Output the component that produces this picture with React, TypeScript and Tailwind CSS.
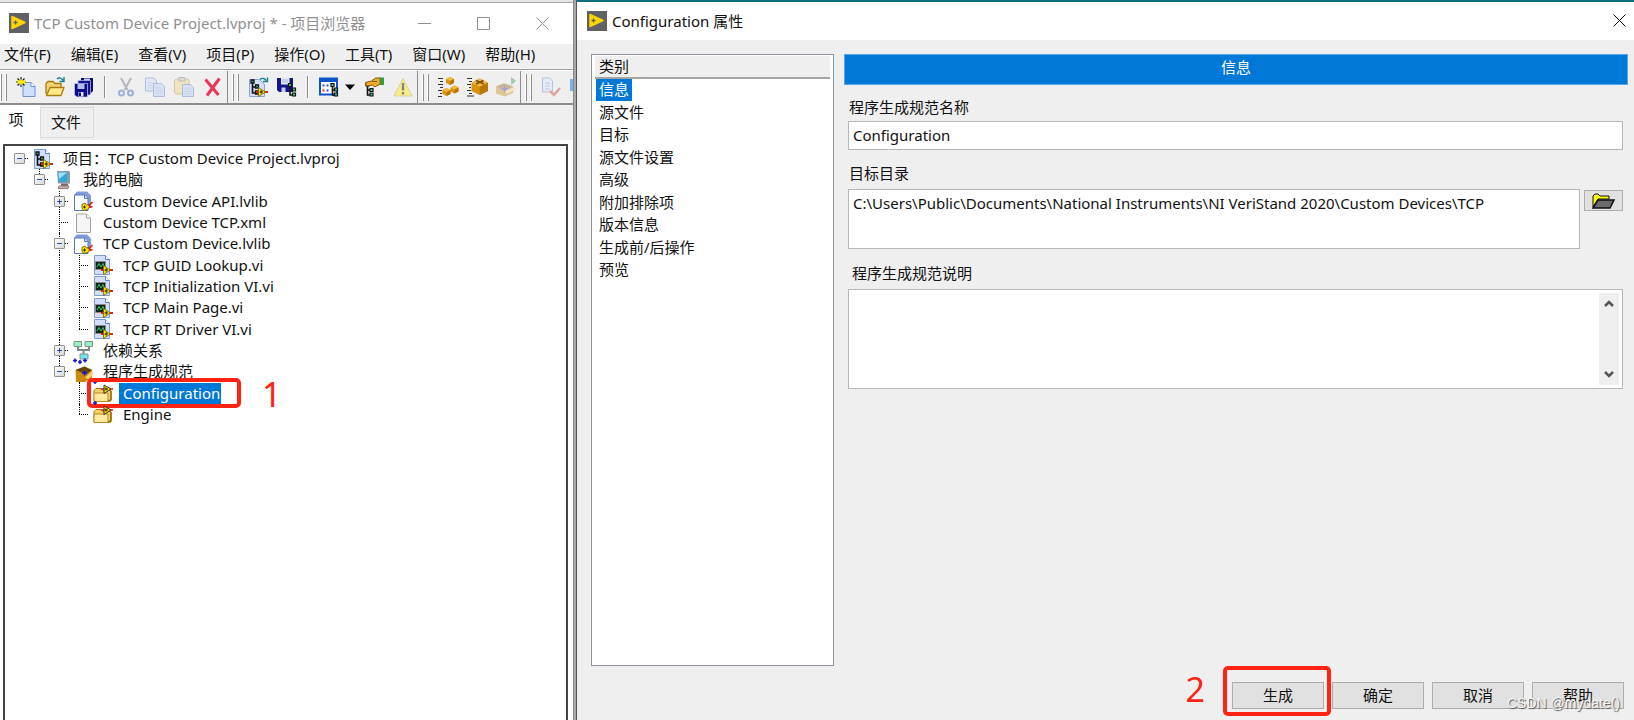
import type { ReactNode } from 'react';
import clsx from 'clsx';

type IconProps = { children: ReactNode; faded?: boolean };

function Icon({ children, faded }: IconProps) {
  return (
    <svg viewBox="0 0 20 20" className={clsx('block h-5 w-5 shrink-0 overflow-visible', faded && 'opacity-40')} aria-hidden="true">
      {children}
    </svg>
  );
}

/* Shared pieces of the LabVIEW icons */

function Sheet() {
  return (
    <>
      <path d="M1.500 .5h11l4 4v15h-15z" fill="#d3dffa" stroke="#7f9bd3" />
      <path d="M12.500 .5v4h4" fill="#fff" stroke="#5f80c4" />
    </>
  );
}

function RunArrow() {
  return (
    <>
      <path d="M8 15h12" stroke="#e02020" strokeWidth="2" />
      <path d="M10.500 10.500l7 4.500-7 4.500z" fill="#ffea00" stroke="#6e6200" strokeWidth=".8" />
      <path d="M11.500 15h3.500M13.200 13.200v3.500" stroke="#222" />
    </>
  );
}

function TreeMark() {
  return (
    <>
      <path d="M4.500 4v12h5M4.500 10h5" fill="none" stroke="#111" strokeWidth="1.600" />
      <path d="M3 3h3v3H3zM7.500 8h3v3h-3zM7.500 14h3v3h-3z" fill="#2fae80" stroke="#111" strokeWidth="1.300" />
    </>
  );
}

function Cube({ x, y, s }: { x: number; y: number; s: number }) {
  return (
    <g transform={`translate(${x} ${y}) scale(${s})`}>
      <path d="M5 0l5 2.500v5L5 10 0 7.500v-5z" fill="#d9930d" />
      <path d="M5 0l5 2.500L5 5 0 2.500z" fill="#f0bc3c" />
      <path d="M5 5l5-2.500v5L5 10z" fill="#b87806" />
    </g>
  );
}

function AppLogo() {
  return (
    <Icon>
      <path d="M0 0h20v20H0z" fill="#5f6164" />
      <path d="M3 3.500L16 9.500 3 15.500z" fill="#ffd500" stroke="#ffd500" strokeWidth="1.500" strokeLinejoin="round" />
      <path d="M4.500 9.500h4M6.500 7.500v4" stroke="#5f6164" strokeWidth="1.300" />
    </Icon>
  );
}

/* Toolbar icons */

const NewIcon = () => (
  <Icon>
    <path d="M7 5.500h8l4 4v10H7z" fill="#cfe0fc" stroke="#6e8fd0" />
    <path d="M15 5.500v4h4" fill="#fff" stroke="#6e8fd0" />
    <path d="M5 0v10M0 5h10M1.500 1.500l7 7M8.500 1.500l-7 7" stroke="#222" strokeWidth="1.200" />
    <path d="M5 2.500v5M1.500 5h8" stroke="#ffee00" strokeWidth="2.800" />
  </Icon>
);

const OpenIcon = () => (
  <Icon>
    <path d="M1 17V6.500l2-2h5l2 2h6v4" fill="#f1d377" stroke="#a97b0a" strokeWidth="1.300" strokeLinejoin="round" />
    <path d="M1.500 18.500L5 10.500h14l-3 8z" fill="#ffe98a" stroke="#a97b0a" strokeWidth="1.300" strokeLinejoin="round" />
    <path d="M12 2c2-2 5-1 6 1.500M19 0v4.500h-4.500" fill="none" stroke="#167f93" strokeWidth="1.400" />
  </Icon>
);

const SaveAllIcon = () => (
  <Icon>
    <path d="M7 1h12v13l-2 2H7z" fill="#0c0c78" />
    <path d="M10 1.500h6v3h-6z" fill="#c3cdf0" />
    <path d="M4 3.500h12.500V17l-1 1H4z" fill="#14148c" stroke="#b9c4e8" strokeWidth=".7" />
    <path d="M.5 6.500h13V20H3L.5 18z" fill="#0c0c86" stroke="#c9d2f0" strokeWidth=".7" />
    <path d="M3.500 7h7v5h-7z" fill="#b3bfea" />
    <path d="M4.500 15h5v4.500h-5z" fill="#dfe4f6" />
    <path d="M5 15.500h2V19H5z" fill="#0c0c86" />
  </Icon>
);

const CutIcon = () => (
  <Icon faded>
    <path d="M5 1l6.500 12M15 1L8.500 13" stroke="#5b6472" strokeWidth="2" />
    <circle cx="5.500" cy="16" r="2.500" fill="none" stroke="#2456b8" strokeWidth="2" />
    <circle cx="14.500" cy="16" r="2.500" fill="none" stroke="#2456b8" strokeWidth="2" />
  </Icon>
);

const CopyIcon = () => (
  <Icon faded>
    <path d="M.5 1h8l3 3v10H.5z" fill="#cfdffc" stroke="#4b74c9" />
    <path d="M2.500 6h6M2.500 8.500h5M2.500 11h5" stroke="#86a8ea" />
    <path d="M8.500 6.500h8l3 3v10h-11z" fill="#b6cefa" stroke="#4b74c9" />
    <path d="M10.500 11h6M10.500 13.500h7M10.500 16h7" stroke="#86a8ea" />
  </Icon>
);

const PasteIcon = () => (
  <Icon faded>
    <path d="M2 2h12l1 1v14H2L.5 15V3.500z" fill="#f3d471" stroke="#a98c36" />
    <path d="M5 .5h6V4H5z" fill="#bbb" stroke="#777" />
    <path d="M8.500 7.500h8l3 3v9h-11z" fill="#b6cefa" stroke="#4b74c9" />
    <path d="M10.500 12h6M10.500 14.500h7M10.500 17h7" stroke="#86a8ea" />
  </Icon>
);

const DeleteIcon = () => (
  <Icon>
    <path d="M2.500 2.500l13 15.500M16.500 1.500L4 18.500" fill="none" stroke="#ee3358" strokeWidth="3" />
  </Icon>
);

const HierarchyIcon = () => (
  <Icon>
    <path d="M1.500 2.500h10l5 5v12h-15z" fill="#d3e0fb" stroke="#8aa3d8" />
    <TreeMark />
    <RunArrow />
    <path d="M12 2.500c2-2 5-1 6 1M19.500 .5v4H15" fill="none" stroke="#167f93" strokeWidth="1.400" />
  </Icon>
);

const SaveTreeIcon = () => (
  <Icon>
    <path d="M0 1h16v14H2l-2-2z" fill="#14148c" />
    <path d="M4 1h8.500v6.500H4z" fill="#e3e8f8" />
    <path d="M5 3h6M5 5h6" stroke="#a8b2dc" />
    <path d="M4.500 10.500h4V15h-4z" fill="#c3cdf0" />
    <path d="M13 8v10h4M13 13h4" fill="none" stroke="#111" strokeWidth="1.600" />
    <path d="M11.500 6.500h3v3h-3zM15.500 11h3v3h-3zM15.500 16h3v3h-3z" fill="#35c98a" stroke="#111" strokeWidth="1.200" />
  </Icon>
);

const ViewIcon = () => (
  <Icon>
    <path d="M1 1.500h17v16H1z" fill="#fff" stroke="#0c55c8" strokeWidth="2" />
    <path d="M0 1h19v4H0z" fill="#0c55c8" />
    <path d="M3.500 8.500h2M7.500 8.500h2M7.500 13.500h2" stroke="#2c4be0" strokeWidth="2" />
    <path d="M3.500 13.500h2" stroke="#f05030" strokeWidth="2.500" />
    <path d="M13.500 8v10h4M13.500 13h4" fill="none" stroke="#111" strokeWidth="1.600" />
    <path d="M12 6.500h3v3h-3zM15.500 11h3v3h-3zM15.500 16h3v3h-3z" fill="#35c98a" stroke="#111" strokeWidth="1.200" />
  </Icon>
);

const HandIcon = () => (
  <Icon>
    <path d="M3.500 8v10h4M3.500 13h4" fill="none" stroke="#111" strokeWidth="1.600" />
    <path d="M2 6h3v3H2zM6 11.500h3v3H6zM6 16h3v3H6z" fill="#35c98a" stroke="#111" strokeWidth="1.200" />
    <path d="M1.500 5.500l6-1.500 4-3h5v6l-6 3-2-2-6 1z" fill="#f0a928" stroke="#8e5a00" />
    <path d="M8 4.500h5" stroke="#8e5a00" />
    <path d="M15.500 .5H20V8h-4.500z" fill="#3a9a3c" />
  </Icon>
);

const WarnIcon = () => (
  <Icon>
    <path d="M10 1.500l9 17.500H1z" fill="#f8ef86" stroke="#d8d0a0" strokeLinejoin="round" />
    <path d="M10 6v7.500M10 15v2.500" stroke="#85857a" strokeWidth="2.400" />
  </Icon>
);

const BuildAllIcon = () => (
  <Icon>
    <path d="M0 1.500h5M2 4.500h3M0 7.500h5M2 10.500h3M0 13.500h4M2 16.500h2M0 19.500h4" stroke="#333" />
    <Cube x={8} y={0} s={0.8} />
    <Cube x={12.500} y={8.500} s={0.8} />
    <Cube x={4.500} y={11} s={0.8} />
  </Icon>
);

const BuildOneIcon = () => (
  <Icon>
    <path d="M0 1.500h5M2 4.500h3M0 7.500h4M2 10.500h2M0 13.500h4M2 16.500h3M0 19h7" stroke="#333" />
    <Cube x={4.500} y={1.500} s={1.650} />
    <path d="M9 3.500l8 3.500M16.500 3.500L9 7" stroke="#7c4c00" strokeWidth="1.400" />
  </Icon>
);

const DeployIcon = () => (
  <Icon faded>
    <path d="M0 9.500l8-3 9 3v6.500l-8 3.500-9-3z" fill="#c98a1b" />
    <path d="M0 9.500l8-3 9 3-8 4z" fill="#8e5e10" />
    <path d="M9 14l9-4 2 2-9 5z" fill="#f9d888" />
    <path d="M8.500 8l1 3 3 1-3 1-1 3-1-3-3-1 3-1z" fill="#2b2be0" />
    <path d="M15 0l5 4-5 4z" fill="#2c9c3a" />
  </Icon>
);

const CheckPageIcon = () => (
  <Icon faded>
    <path d="M1.500 1h7l3 3v11h-10z" fill="#dbe7ff" stroke="#5b7fd0" />
    <path d="M4 6h5M4 9h5M4 12h5" stroke="#7d9be0" />
    <path d="M9 14l4 4 6-7" fill="none" stroke="#c23a22" strokeWidth="2.500" />
  </Icon>
);

/* Tree icons */

const ProjectIcon = () => (
  <Icon>
    <Sheet />
    <TreeMark />
    <RunArrow />
  </Icon>
);

const ComputerIcon = () => (
  <Icon>
    <path d="M4 1h12l1 1v11.500H5z" fill="#8c9aa6" />
    <path d="M5.500 2.500h8.500v9.500H5.500z" fill="#2fa8d8" />
    <path d="M5.500 2.500h8.500l-8 6.500z" fill="#9be2f7" />
    <path d="M8 13.500h7V16H8z" fill="#7d6a68" />
    <path d="M6 16h10l-1 2.500H5z" fill="#c7b2ac" stroke="#94807c" />
  </Icon>
);

const LibraryIcon = () => (
  <Icon>
    <path d="M1 4l3-3.500h10l4 4V17H1z" fill="#7f9cdd" />
    <path d="M1.500 4h10l3.500 3.500v12H1.500z" fill="#fff" stroke="#5878c0" />
    <path d="M11.500 4v3.500H15" fill="#cddafa" stroke="#5878c0" />
    <path d="M9 13.500l3-1.500 1.500 2 2.500-.5.5 2.500-2 2.500-4 1-1.500-2.500z" fill="#ffe600" stroke="#6e6200" strokeWidth=".9" />
    <path d="M15.500 15l4-4M16.500 16.500l3-1" stroke="#e01818" strokeWidth="1.600" />
    <path d="M11.500 14.500v3M10 16h3" stroke="#222" strokeWidth=".9" />
  </Icon>
);

const FileIcon = () => (
  <Icon>
    <path d="M3.500 1h10l4 4v14.500h-14z" fill="#f6f6f6" stroke="#a0a0a0" />
    <path d="M13.500 1v4h4" fill="#fff" stroke="#a0a0a0" />
  </Icon>
);

const ViIcon = () => (
  <Icon>
    <Sheet />
    <path d="M2.500 6.500h10v8h-10z" fill="#10261a" stroke="#8a8a8a" />
    <path d="M4 12l2-3.500L8 12l2-3.500 1 3" fill="none" stroke="#3dcc66" />
    <RunArrow />
  </Icon>
);

const DependencyIcon = () => (
  <Icon>
    <path d="M5 6v4h11V6M10.500 10v4" fill="none" stroke="#7d8a8a" strokeWidth="2" />
    <path d="M1 1.500h7.500v5H1zM12 1.500h7.500v5H12z" fill="#9af0c4" stroke="#7f9488" />
    <path d="M7 14h8v5H7z" fill="#6ee8ee" stroke="#7f9488" />
  </Icon>
);

const BuildSpecIcon = () => (
  <Icon>
    <path d="M2.500 8l9-3.500L19 8v8l-7 4H3z" fill="#c98a0e" />
    <path d="M2.500 8l9-3.500L19 8l-6 4.500z" fill="#6b4500" />
    <path d="M12 15.500L19 9l1.500 3-5 5.500z" fill="#f7cf6b" />
    <path d="M2-3.500v4M0-1.500h4M7-2v4M5 0h4M12-3.500v4M10-1.500h4M11.500 8.500v5M9 11h5" stroke="#1414e0" strokeWidth="1.600" />
  </Icon>
);

const SpecFolderIcon = () => (
  <Icon>
    <path d="M1 18V7.500l2-2h5l2 2h8V18z" fill="#f3d06a" stroke="#a97b0a" strokeLinejoin="round" />
    <path d="M1 18.500V10h14v8.500z" fill="#ffe9a0" stroke="#b98a1a" strokeLinejoin="round" />
    <path d="M15 18.500l3-2V8" fill="none" stroke="#8a6400" strokeWidth="1.300" />
    <path d="M8 6h12" stroke="#e02020" strokeWidth="1.600" />
    <path d="M11 2l7 4-7 4.500z" fill="#ffe600" stroke="#333" />
    <path d="M11.500 6h3.500M13 4.500v3" stroke="#222" />
    <path d="M0-1h4M2-3v4" stroke="#1414e0" strokeWidth="1.500" />
  </Icon>
);

/* Project explorer */

type Guide = 'none' | 'line' | 'tee' | 'end' | 'root';
type TreeRow = {
  label: string;
  guides: Guide[];
  toggle?: '+' | '-';
  icon: ReactNode;
  selected?: boolean;
};

const treeRows: TreeRow[] = [
  { label: '项目：TCP Custom Device Project.lvproj', guides: ['root'], toggle: '-', icon: <ProjectIcon /> },
  { label: '我的电脑', guides: ['none', 'end'], toggle: '-', icon: <ComputerIcon /> },
  { label: 'Custom Device API.lvlib', guides: ['none', 'none', 'tee'], toggle: '+', icon: <LibraryIcon /> },
  { label: 'Custom Device TCP.xml', guides: ['none', 'none', 'tee'], icon: <FileIcon /> },
  { label: 'TCP Custom Device.lvlib', guides: ['none', 'none', 'tee'], toggle: '-', icon: <LibraryIcon /> },
  { label: 'TCP GUID Lookup.vi', guides: ['none', 'none', 'line', 'tee'], icon: <ViIcon /> },
  { label: 'TCP Initialization VI.vi', guides: ['none', 'none', 'line', 'tee'], icon: <ViIcon /> },
  { label: 'TCP Main Page.vi', guides: ['none', 'none', 'line', 'tee'], icon: <ViIcon /> },
  { label: 'TCP RT Driver VI.vi', guides: ['none', 'none', 'line', 'end'], icon: <ViIcon /> },
  { label: '依赖关系', guides: ['none', 'none', 'tee'], toggle: '+', icon: <DependencyIcon /> },
  { label: '程序生成规范', guides: ['none', 'none', 'end'], toggle: '-', icon: <BuildSpecIcon /> },
  { label: 'Configuration', guides: ['none', 'none', 'none', 'tee'], icon: <SpecFolderIcon />, selected: true },
  { label: 'Engine', guides: ['none', 'none', 'none', 'end'], icon: <SpecFolderIcon /> },
];

function GuideCell({ guide, toggle }: { guide: Guide; toggle?: '+' | '-' }) {
  const branch = guide !== 'none' && guide !== 'line';
  return (
    <span className="relative flex h-full w-5 shrink-0 items-center">
      {guide !== 'none' && guide !== 'root' && (
        <span
          className={clsx('absolute top-0 left-[9px] border-l border-dotted border-black', guide === 'end' ? 'h-1/2' : 'h-full')}
        />
      )}
      {branch && <span className="ml-[9px] w-[9px] border-t border-dotted border-black" />}
      {toggle && (
        <button
          type="button"
          aria-label={toggle === '+' ? '展开' : '折叠'}
          className="absolute left-1 h-[11px] w-[11px] rounded-[1px] border border-[#919191] bg-linear-to-br from-white to-[#d8d8d8]"
        >
          <span className="absolute top-1 left-[2px] h-px w-[5px] bg-[#2b4fb0]" />
          {toggle === '+' && <span className="absolute top-[2px] left-1 h-[5px] w-px bg-[#2b4fb0]" />}
        </button>
      )}
    </span>
  );
}

function ProjectTree() {
  return (
    <ul className="grid h-[277px] auto-rows-fr pl-[5px]" role="tree">
      {treeRows.map((row, index) => (
        <li key={index} role="treeitem" aria-selected={!!row.selected} className="relative flex min-h-0 items-center">
          {row.guides.map((guide, column) => (
            <GuideCell key={column} guide={guide} toggle={column === row.guides.length - 1 ? row.toggle : undefined} />
          ))}
          <span className="ml-[3px]">{row.icon}</span>
          <span
            className={clsx(
              'ml-[6px] pl-1 pr-px leading-[21px] whitespace-nowrap',
              row.selected && 'bg-[#0078d7] text-white'
            )}
          >
            {row.label}
          </span>
          {/* Step 1 marker */}
          {row.selected && (
            <>
              <span className="absolute -top-1 left-[77px] h-[30px] w-[154px] rounded-[5px] border-4 border-[#ff2314]" />
              <span className="absolute top-[-5px] left-[252px] text-[34px] leading-none text-[#ff2314]">1</span>
            </>
          )}
        </li>
      ))}
    </ul>
  );
}

function Grip() {
  return (
    <span className="flex h-[27px] w-[7px] shrink-0 justify-between">
      <span className="w-[2px] border-r border-[#8c8c8c] bg-white" />
      <span className="w-[2px] border-r border-[#8c8c8c] bg-white" />
    </span>
  );
}

function ToolGroup({ children, last }: { children: ReactNode; last?: boolean }) {
  return (
    <div className={clsx('flex h-full items-center gap-[9px] pl-1', last ? 'min-w-0 overflow-hidden' : 'shrink-0 border-r border-[#8c8c8c] pr-1')}>
      {children}
    </div>
  );
}

function Tool({ label, children }: { label: string; children: ReactNode }) {
  return (
    <button type="button" aria-label={label} className="shrink-0">
      {children}
    </button>
  );
}

function Divider() {
  return <span className="mx-px h-[22px] w-[2px] shrink-0 border-r border-white bg-[#8c8c8c]" />;
}

const menus = ['文件(F)', '编辑(E)', '查看(V)', '项目(P)', '操作(O)', '工具(T)', '窗口(W)', '帮助(H)'];

function ProjectExplorer() {
  return (
    <section className="flex w-[574px] shrink-0 flex-col border-r border-[#8a8a8a] bg-[#efefef]">
      <div className="h-[3px] border-b border-[#a8a8a8] bg-[#e6e6e6]" />
      <header className="flex h-[41px] items-center bg-white pb-px pl-[9px] text-[#8f8f8f]">
        <AppLogo />
        <h1 className="ml-[5px] flex-1 whitespace-nowrap">TCP Custom Device Project.lvproj * - 项目浏览器</h1>
        <div className="flex gap-[46px] pr-6">
          <button type="button" aria-label="最小化">
            <svg viewBox="0 0 13 13" className="block h-[13px] w-[13px]"><path d="M0 6.500h13" stroke="#8f8f8f" /></svg>
          </button>
          <button type="button" aria-label="最大化">
            <svg viewBox="0 0 13 13" className="block h-[13px] w-[13px]"><path d="M.5 .5h12v12H.5z" fill="none" stroke="#8f8f8f" /></svg>
          </button>
          <button type="button" aria-label="关闭">
            <svg viewBox="0 0 13 13" className="block h-[13px] w-[13px]"><path d="M.5 .5l12 12M12.500 .5l-12 12" stroke="#8f8f8f" /></svg>
          </button>
        </div>
      </header>
      <nav className="flex h-[26px] items-center gap-5 border-b border-[#a0a0a0] pb-[6px] pl-1">
        {menus.map((menu) => (
          <button key={menu} type="button" className="whitespace-nowrap">{menu}</button>
        ))}
      </nav>
      <div className="flex h-[35px] border-t border-b-2 border-t-white border-b-[#8c8c8c]">
        <div className="-ml-1 flex h-full min-w-0 flex-1">
          <ToolGroup>
            <Grip />
            <Tool label="新建"><NewIcon /></Tool>
            <Tool label="打开"><OpenIcon /></Tool>
            <Tool label="保存全部"><SaveAllIcon /></Tool>
            <Divider />
            <Tool label="剪切"><CutIcon /></Tool>
            <Tool label="复制"><CopyIcon /></Tool>
            <Tool label="粘贴"><PasteIcon /></Tool>
            <Tool label="删除"><DeleteIcon /></Tool>
          </ToolGroup>
          <ToolGroup>
            <Grip />
            <Tool label="层次结构"><HierarchyIcon /></Tool>
            <Tool label="保存项目"><SaveTreeIcon /></Tool>
            <Divider />
            <button type="button" aria-label="视图" className="flex shrink-0 items-center gap-[6px]">
              <ViewIcon />
              <svg viewBox="0 0 10 6" className="h-[6px] w-[10px]"><path d="M0 .5h10L5 6z" /></svg>
            </button>
            <Tool label="属性"><HandIcon /></Tool>
            <Tool label="冲突"><WarnIcon /></Tool>
          </ToolGroup>
          <ToolGroup>
            <Grip />
            <Tool label="全部生成"><BuildAllIcon /></Tool>
            <Tool label="生成规范"><BuildOneIcon /></Tool>
            <Tool label="部署"><DeployIcon /></Tool>
          </ToolGroup>
          <ToolGroup last>
            <Grip />
            <Tool label="检查"><CheckPageIcon /></Tool>
            <span className="mt-2 h-3 w-5 shrink-0 self-start bg-[#7db0e8]" />
          </ToolGroup>
        </div>
      </div>
      <div className="flex items-start" role="tablist">
        <button type="button" role="tab" aria-selected="true" className="h-[35px] w-10 bg-white pr-2 pb-2">项</button>
        <button type="button" role="tab" aria-selected="false" className="mt-[2px] h-[31px] w-[54px] border border-[#dadada] pr-[2px] pb-[2px]">文件</button>
      </div>
      <div className="flex flex-1 flex-col bg-white pt-1 pr-[5px] pl-[3px]">
        <div className="flex-1 border-2 border-b-0 border-[#444] bg-white pt-[2px]">
          <ProjectTree />
        </div>
      </div>
    </section>
  );
}

/* Build specification properties */

const categories = ['信息', '源文件', '目标', '源文件设置', '高级', '附加排除项', '版本信息', '生成前/后操作', '预览'];

function ActionButton({ label, marked }: { label: string; marked?: boolean }) {
  return (
    <div className="relative">
      <button type="button" className="h-[27px] w-[92px] border border-[#adadad] bg-[#e1e1e1] leading-none">
        {label}
      </button>
      {/* Step 2 marker */}
      {marked && (
        <>
          <span className="absolute -top-4 -left-[9px] h-[50px] w-[108px] rounded-[5px] border-4 border-[#ff2314]" />
          <span className="absolute top-[-10px] right-[119px] text-[34px] leading-none text-[#ff2314]">2</span>
        </>
      )}
    </div>
  );
}

function CategoryList() {
  return (
    <aside className="flex w-[243px] shrink-0 flex-col border border-[#8e949b] bg-white p-[3px] pt-px">
      <h2 className="h-[23px] border-b-2 border-[#a5a5a5] bg-[#efefef] pl-1 leading-[21px]">类别</h2>
      <ul className="grid h-[203px] auto-rows-fr pl-px">
        {categories.map((category, index) => (
          <li key={category} className="min-h-0">
            <button
              type="button"
              className={clsx('block px-[3px] pb-[2px] leading-5', index === 0 && 'bg-[#0078d7] text-white')}
            >
              {category}
            </button>
          </li>
        ))}
      </ul>
    </aside>
  );
}

function InfoForm() {
  return (
    <form className="flex min-w-0 flex-1 flex-col">
      <h2 className="h-[31px] border border-[#5aa7e6] bg-[#0078d7] text-center leading-[24px] text-white">信息</h2>
      <div className="flex flex-col pr-[5px] pl-1">
        <label htmlFor="spec-name" className="mt-[11px] h-[25px] pl-px leading-[22px]">程序生成规范名称</label>
        <input
          id="spec-name"
          defaultValue="Configuration"
          className="h-[29px] w-full border border-[#b4b6bc] bg-white px-1 pb-[2px] outline-none"
        />
        <label htmlFor="spec-dir" className="mt-[11px] h-7 pl-px leading-[24px]">目标目录</label>
        <div className="flex items-start gap-1">
          <textarea
            id="spec-dir"
            defaultValue="C:\Users\Public\Documents\National Instruments\NI VeriStand 2020\Custom Devices\TCP"
            className="h-[60px] min-w-0 flex-1 resize-none overflow-hidden border border-[#b4b6bc] bg-white px-1 pt-[2px] leading-[22px] outline-none"
          />
          <button type="button" aria-label="浏览" className="mt-px flex h-[21px] w-[39px] items-center justify-center border border-[#adadad] bg-[#e1e1e1]">
            <svg viewBox="0 0 23 16" className="h-4 w-[23px]">
              <path d="M1 14V3l2-2h3l2 2h9v3H6z" fill="#ffff00" stroke="#111" />
              <path d="M1 15L6 7h16l-4 8z" fill="#6c6c6c" stroke="#111" strokeWidth="1.500" />
            </svg>
          </button>
        </div>
        <label htmlFor="spec-note" className="mt-3 h-7 pl-1 leading-[25px]">程序生成规范说明</label>
        <div className="flex h-[100px] border border-[#b4b6bc] bg-white p-[3px] pl-0">
          <textarea id="spec-note" className="min-w-0 flex-1 resize-none px-1 outline-none" />
          <div className="flex w-5 flex-col justify-between bg-[#efefef] py-[6px]">
            <button type="button" aria-label="向上滚动" className="flex justify-center">
              <svg viewBox="0 0 10 10" className="h-[10px] w-[10px]"><path d="M1 7l4-4 4 4" fill="none" stroke="#555" strokeWidth="2.500" /></svg>
            </button>
            <button type="button" aria-label="向下滚动" className="flex justify-center">
              <svg viewBox="0 0 10 10" className="h-[10px] w-[10px]"><path d="M1 3l4 4 4-4" fill="none" stroke="#555" strokeWidth="2.500" /></svg>
            </button>
          </div>
        </div>
      </div>
    </form>
  );
}

function PropertiesDialog() {
  return (
    <section className="relative flex min-w-0 flex-1 flex-col border-l border-[#555] bg-[#efefef]">
      <div className="h-[2px] bg-[#0b7078]" />
      <header className="flex h-[38px] items-center bg-white pr-2 pb-px pl-[10px]">
        <AppLogo />
        <h1 className="ml-[5px] flex-1">Configuration 属性</h1>
        <button type="button" aria-label="关闭">
          <svg viewBox="0 0 13 13" className="block h-[13px] w-[13px]"><path d="M.5 .5l12 12M12.500 .5l-12 12" stroke="#000" /></svg>
        </button>
      </header>
      <div className="flex flex-1 gap-[10px] pt-[14px] pr-[6px] pb-4 pl-[14px]">
        <CategoryList />
        <InfoForm />
      </div>
      <footer className="flex justify-end gap-2 pr-[10px] pb-[11px]">
        <ActionButton label="生成" marked />
        <ActionButton label="确定" />
        <ActionButton label="取消" />
        <ActionButton label="帮助" />
      </footer>
      <p className="absolute right-[14px] bottom-[7px] font-['Liberation_Sans',sans-serif] text-[14px] leading-[20px] text-[#f4f4f4] [text-shadow:1px_1px_1px_#555]">CSDN @mydate()</p>
    </section>
  );
}

export default function App() {
  return (
    <main className="flex min-h-screen overflow-hidden bg-[#b4b4b4] font-['Noto_Sans','Noto_Sans_CJK_SC',sans-serif] text-[15px] leading-[20px] text-[#111]">
      <ProjectExplorer />
      <div className="w-[2px] shrink-0 bg-[#a8a8a8]" />
      <PropertiesDialog />
    </main>
  );
}
